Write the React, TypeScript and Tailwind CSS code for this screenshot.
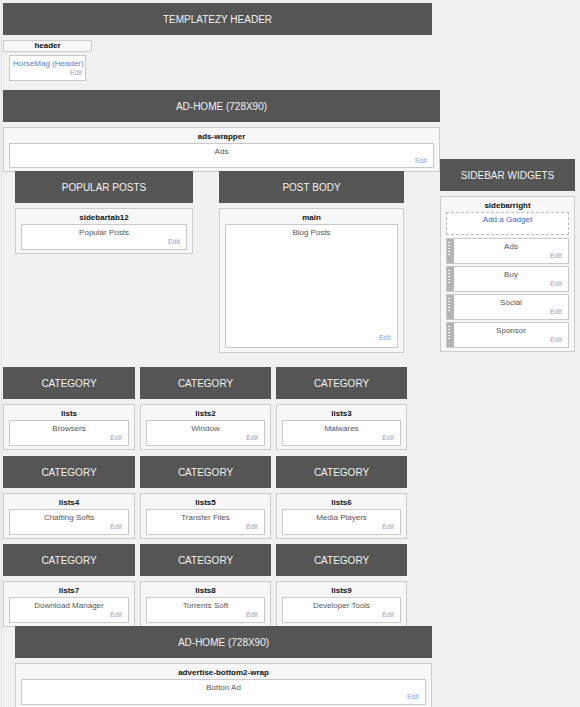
import React from "react";

const Bar = ({title, className = ""}: { title: string; className?: string }) => (
    <div
        className={`h-[32px] bg-[#555555] text-[#f2f2f2] text-[10px] flex items-center justify-center uppercase ${className}`}>
        {title}
    </div>
);

const Edit = () => (
    <div className="mt-auto pb-[5px] text-right text-[7px] leading-[8px] text-[#8ca3d6]">Edit</div>
);

const Widget = ({title, h = "h-[26px]", titleColor = "text-[#555555]", className = "px-[6px]"}: {
    title: string;
    h?: string;
    titleColor?: string;
    className?: string
}) => (
    <div className={`bg-white border border-[#c9c9c9] flex flex-col pt-[3px] ${h} ${className}`}>
        <div className={`text-[8px] leading-[10px] text-center whitespace-nowrap ${titleColor}`}>{title}</div>
        <Edit/>
    </div>
);

const SideWidget = ({title}: { title: string }) => (
    <div className="h-[26px] bg-white border border-[#c9c9c9] flex">
        <div className="w-[7px] shrink-0 bg-[#b5b5b5] pt-[3px] pl-[1px]">
            <div
                className="w-[2px] h-[14px] bg-[repeating-linear-gradient(to_bottom,#ffffff_0px,#ffffff_1px,transparent_1px,transparent_3px)]"/>
        </div>
        <div className="flex-1 flex flex-col px-[6px] pt-[3px]">
            <div className="text-[8px] leading-[10px] text-center text-[#555555]">{title}</div>
            <Edit/>
        </div>
    </div>
);

const Section = ({name, children, className = ""}: {
    name: string;
    children: React.ReactNode;
    className?: string
}) => (
    <div className={`border border-[#cccccc] bg-[#f7f7f7] px-[5px] pt-[4px] pb-[3px] ${className}`}>
        <div className="text-[8px] leading-[10px] font-bold text-center text-[#111111] mb-[1px]">{name}</div>
        {children}
    </div>
);

const categories = [
    [["lists", "Browsers"], ["lists2", "Window"], ["lists3", "Malwares"]],
    [["lists4", "Chatting Softs"], ["lists5", "Transfer Files"], ["lists6", "Media Players"]],
    [["lists7", "Download Manager"], ["lists8", "Torrents Soft"], ["lists9", "Developer Tools"]],
];

const CategoryRow = ({items, className = ""}: { items: string[][]; className?: string }) => (
    <div className={`grid grid-cols-[132px_131px_131px] gap-x-[5px] ${className}`}>
        {items.map(([name, title]) => (
            <div key={name}>
                <Bar title="Category"/>
                <Section name={name} className="mt-[5px]">
                    <Widget title={title}/>
                </Section>
            </div>
        ))}
    </div>
);

export default function App() {
    return (
        <div className="w-[580px] h-[707px] overflow-hidden bg-[#f1f1f1] pl-[1px] font-['Liberation_Sans',Arial,sans-serif]">
            <div className="h-full border-l border-[#e0e0e0] pl-[1px] pt-[3px]">
                <Bar title="Templatezy Header" className="w-[429px]"/>

                <div className="mt-[5px] w-[89px] h-[12px] border border-[#cccccc] bg-[#f7f7f7]">
                    <div className="text-[8px] leading-[10px] font-bold text-center text-[#111111]">header</div>
                </div>
                <Widget title="HorseMag (Header)" titleColor="text-[#5a7bcc]"
                        className="ml-[6px] mt-[3px] w-[77px] px-[3px]"/>

                <Bar title="AD-HOME (728X90)" className="mt-[9px] w-[437px]"/>
                <Section name="ads-wrapper" className="mt-[5px] w-[437px]">
                    <Widget title="Ads" h="h-[25px]"/>
                </Section>

                <div className="flex -mt-[13px]">
                    <div className="flex ml-[12px] pt-[12px] gap-[26px] items-start">
                        <div className="w-[178px]">
                            <Bar title="Popular Posts"/>
                            <Section name="sidebartab12" className="mt-[5px]">
                                <Widget title="Popular Posts"/>
                            </Section>
                        </div>
                        <div className="w-[185px]">
                            <Bar title="Post Body"/>
                            <Section name="main" className="mt-[5px] pb-[4px]">
                                <Widget title="Blog Posts" h="h-[124px]"/>
                            </Section>
                        </div>
                    </div>
                    <div className="ml-[36px] w-[135px]">
                        <Bar title="Sidebar Widgets"/>
                        <Section name="sidebarright" className="mt-[5px] pt-[3px]">
                            <div
                                className="h-[23px] bg-white border border-dashed border-[#bbbbbb] pt-[2px] text-[8px] leading-[10px] text-center text-[#3c5fd1]">
                                Add a Gadget
                            </div>
                            <div className="mt-[3px] flex flex-col gap-[2px]">
                                <SideWidget title="Ads"/>
                                <SideWidget title="Buy"/>
                                <SideWidget title="Social"/>
                                <SideWidget title="Sponsor"/>
                            </div>
                        </Section>
                    </div>
                </div>

                <div className="mt-[14px]">
                    <CategoryRow items={categories[0]}/>
                    <CategoryRow items={categories[1]} className="mt-[6px]"/>
                    <CategoryRow items={categories[2]} className="mt-[5px]"/>
                </div>

                <Bar title="AD-HOME (728X90)" className="-mt-[1px] ml-[12px] w-[417px] relative"/>
                <Section name="advertise-bottom2-wrap" className="mt-[5px] ml-[12px] w-[417px]">
                    <Widget title="Botton Ad"/>
                </Section>
            </div>
        </div>
    );
}
